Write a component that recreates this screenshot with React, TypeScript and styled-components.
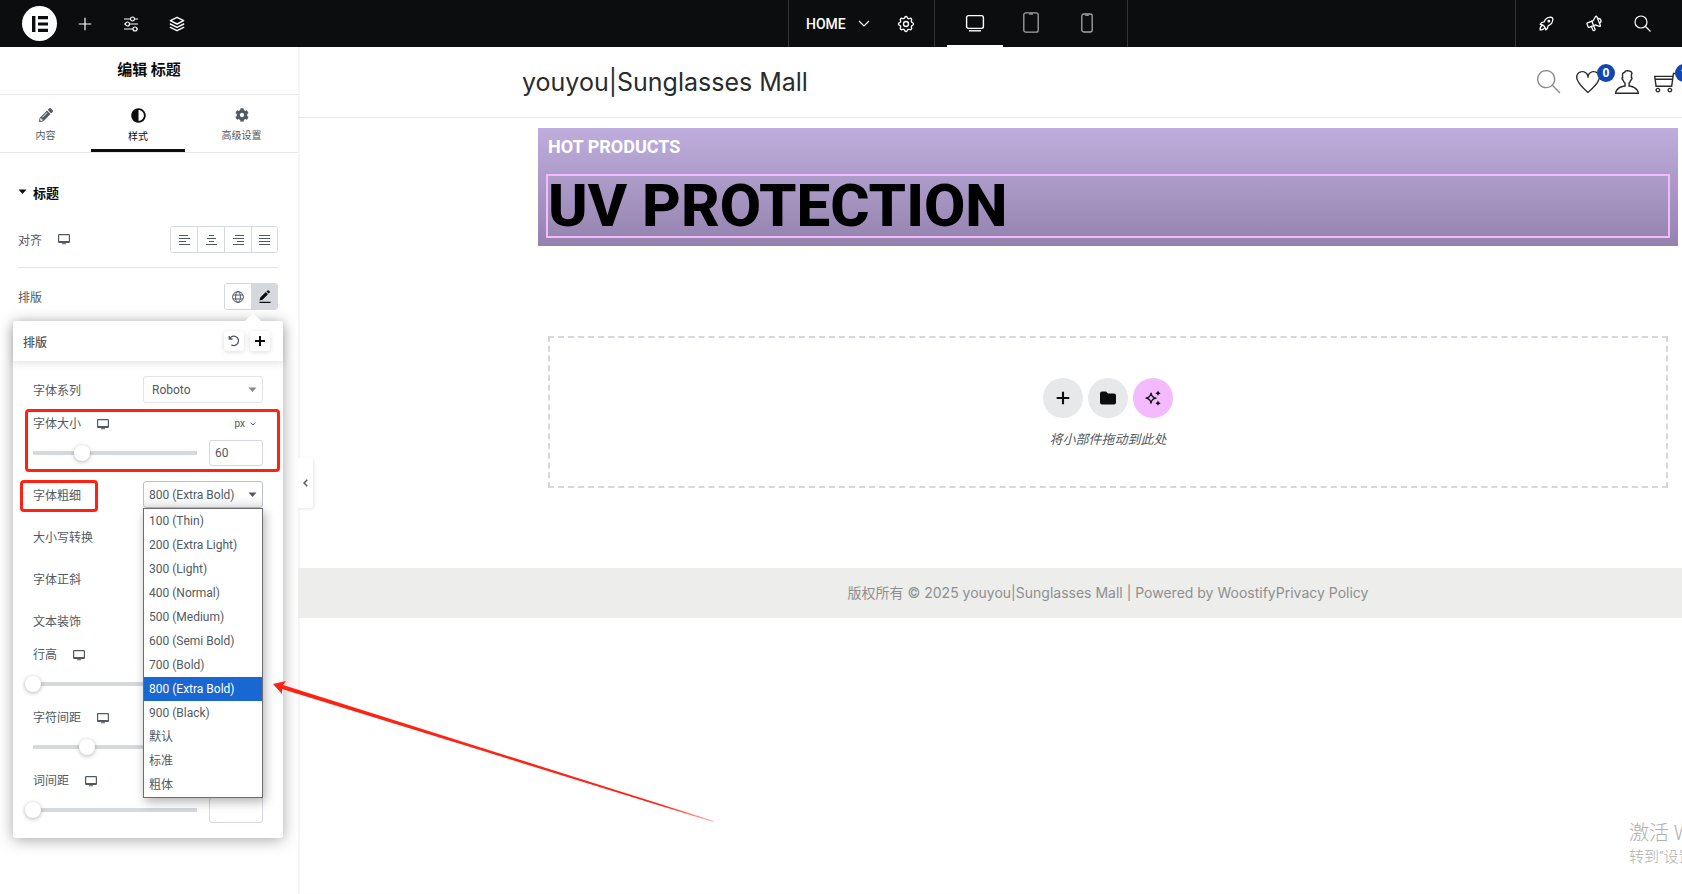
import React from "react";
import styled, { createGlobalStyle, css } from "styled-components";
import { TfiSearch, TfiHeart, TfiUser, TfiShoppingCart } from "react-icons/tfi";
import { TbStack2, TbSettings, TbRocket, TbSpeakerphone } from "react-icons/tb";
import { FaPencilAlt, FaAdjust, FaCog } from "react-icons/fa";

const GlobalStyle = createGlobalStyle`
  * { box-sizing: border-box; }
  body {
    margin: 0;
    background: #fff;
    font-family: Roboto, "Noto Sans CJK SC", sans-serif;
    font-size: 12px;
    color: #515962;
  }
  button, select, input { font: inherit; color: inherit; }
  h1, h2, h3, p, ul { margin: 0; padding: 0; }
`;

const RED = "#ff2213";
const LINE = "#d5d8dc";

const Page = styled.div`
  position: relative;
  min-height: 100vh;
  display: flex;
  flex-direction: column;
  overflow: hidden;
`;

/* ---------- top bar ---------- */

const TopBar = styled.header`
  display: grid;
  grid-template-columns: 788fr auto 387fr auto;
  height: 47px;
  background: #0c0d0e;
  color: #fff;
`;

const BarGroup = styled.div`
  display: flex;
  align-items: center;
`;

const LeftGroup = styled(BarGroup)`
  padding-left: 22px;
  gap: 18px;
`;

const CenterGroup = styled(BarGroup)`
  border-left: 1px solid #323437;
  border-right: 1px solid #323437;
`;

const PageGroup = styled(BarGroup)`
  width: 146px;
  height: 47px;
  padding-left: 17px;
  border-right: 1px solid #323437;
`;

const DeviceGroup = styled(BarGroup)`
  padding: 0 12px;
  width: 192px;
`;

const RightGroup = styled(BarGroup)`
  grid-column: 4;
  width: 167px;
  padding-left: 16px;
  gap: 20px;
  border-left: 1px solid #323437;
`;

const IconButton = styled.button`
  width: 28px;
  height: 28px;
  padding: 0;
  border: 0;
  background: none;
  display: flex;
  align-items: center;
  justify-content: center;
`;

const LogoButton = styled(IconButton)`
  width: 35px;
  height: 35px;
  border-radius: 50%;
  background: #fff;
  margin-right: -4px;
`;

const PageName = styled.button`
  display: flex;
  align-items: center;
  gap: 12px;
  padding: 0;
  border: 0;
  background: none;
  font-size: 14px;
  line-height: 20px;
  font-weight: 500;
  margin-right: 22px;
`;

const DeviceTab = styled.button<{ $active?: boolean }>`
  width: 56px;
  height: 47px;
  padding: 0;
  border: 0;
  background: none;
  border-bottom: 2px solid ${(p) => (p.$active ? "#fff" : "transparent")};
  color: ${(p) => (p.$active ? "#fff" : "#a3a5a8")};
  display: flex;
  align-items: center;
  justify-content: center;
`;

/* ---------- side panel ---------- */

const Workspace = styled.div`
  flex: 1;
  display: flex;
`;

const Panel = styled.aside`
  flex: 0 0 298px;
  overflow: hidden;
  display: flex;
  flex-direction: column;
  background: #fff;
`;

const PanelTitle = styled.h2`
  height: 48px;
  line-height: 46px;
  text-align: center;
  font-size: 15px;
  font-weight: 700;
  color: #0c0d0e;
  border-bottom: 1px solid #e6e8ea;
`;

const Tabs = styled.nav`
  display: grid;
  grid-template-columns: 91fr 94fr 113fr;
  height: 58px;
  border-bottom: 1px solid #e6e8ea;
`;

const Tab = styled.button<{ $active?: boolean }>`
  display: flex;
  flex-direction: column;
  align-items: center;
  gap: 6px;
  padding: 13px 0 0;
  border: 0;
  border-bottom: 3px solid ${(p) => (p.$active ? "#0c0d0e" : "transparent")};
  background: none;
  font-size: 10px;
  line-height: 16px;
  color: ${(p) => (p.$active ? "#0c0d0e" : "#515962")};
  svg { display: block; }
`;

const Controls = styled.div`
  padding: 19px 20px 56px 18px;
`;

const SectionToggle = styled.button`
  display: flex;
  align-items: center;
  gap: 6px;
  height: 40px;
  margin-bottom: 1px;
  padding: 0;
  border: 0;
  background: none;
  font-size: 13px;
  font-weight: 700;
  color: #0c0d0e;
`;

const ControlRow = styled.div<{ $divided?: boolean }>`
  display: flex;
  align-items: center;
  justify-content: space-between;
  ${(p) =>
    p.$divided
      ? css`
          padding: 13px 0 14px;
          margin-bottom: 15px;
          border-bottom: 1px solid #e1e3e6;
        `
      : ""}
`;

const LabelGroup = styled.div`
  display: flex;
  align-items: center;
  gap: 16px;
  svg { display: block; }
`;

const ButtonSet = styled.div`
  display: flex;
  height: 27px;
  border: 1px solid ${LINE};
  border-radius: 3px;
  overflow: hidden;
`;

const SetButton = styled.button<{ $active?: boolean }>`
  width: 27px;
  padding: 0;
  border: 0;
  background: ${(p) => (p.$active ? LINE : "#fff")};
  color: ${(p) => (p.$active ? "#0c0d0e" : "#515962")};
  display: flex;
  align-items: center;
  justify-content: center;
  & + & { border-left: 1px solid ${LINE}; }
  &:first-child, &:last-child { width: 26px; }
`;

/* ---------- typography popover ---------- */

const Popover = styled.section`
  position: relative;
  margin: 11px -5px 0;
  border-radius: 3px;
  background: #fff;
  box-shadow: 0 2px 15px rgba(0, 0, 0, 0.35);
  &::before {
    content: "";
    position: absolute;
    top: -8px;
    right: 22px;
    border: 8px solid transparent;
    border-top: 0;
    border-bottom-color: #fff;
  }
`;

const PopoverHeader = styled.div`
  display: flex;
  align-items: center;
  gap: 6px;
  height: 40px;
  padding: 0 13px 0 10px;
  border-radius: 3px 3px 0 0;
  box-shadow: 0 2px 8px rgba(0, 0, 0, 0.12);
`;

const PopoverTitle = styled.h3`
  flex: 1;
  font-size: 12px;
  font-weight: 500;
`;

const SquareButton = styled.button`
  width: 20px;
  height: 20px;
  padding: 0;
  border: 0;
  border-radius: 3px;
  background: #fff;
  box-shadow: 0 1px 5px rgba(0, 0, 0, 0.14);
  display: flex;
  align-items: center;
  justify-content: center;
`;

const PopoverBody = styled.div`
  display: flex;
  flex-direction: column;
  gap: 15px;
  padding: 15px 20px 15px;
`;

const Field = styled.div`
  position: relative;
  display: flex;
  align-items: center;
  justify-content: space-between;
  height: 27px;
`;

const SliderField = styled.div`
  position: relative;
  display: flex;
  flex-direction: column;
  gap: 9px;
`;

const SliderHead = styled.div`
  display: flex;
  align-items: center;
  justify-content: space-between;
  height: 12px;
  line-height: 12px;
`;

const SliderRow = styled.div`
  display: flex;
  align-items: center;
  gap: 12px;
  height: 27px;
`;

const Track = styled.div`
  flex: 1;
  height: 16px;
  display: flex;
  background: linear-gradient(${LINE}, ${LINE}) center / 100% 4px no-repeat;
`;

const Range = styled.input`
  appearance: none;
  flex: 1;
  min-width: 0;
  height: 16px;
  margin: 0 -8px;
  background: none;
  &::-webkit-slider-thumb {
    appearance: none;
    width: 16px;
    height: 16px;
    border-radius: 50%;
    background: #fff;
    box-shadow: 0 1px 4px rgba(0, 0, 0, 0.3);
  }
`;

const NumberBox = styled.input`
  width: 54px;
  height: 26px;
  padding: 0 5px;
  border: 1px solid ${LINE};
  border-radius: 3px;
  background: #fff;
`;

const UnitButton = styled.button`
  display: flex;
  align-items: center;
  gap: 5px;
  padding: 0 7px 0 0;
  border: 0;
  background: none;
  font-size: 10px;
  line-height: 12px;
`;

const SelectWrap = styled.div`
  position: relative;
  width: 120px;
  height: 27px;
  svg {
    position: absolute;
    right: 6px;
    top: 11px;
    pointer-events: none;
  }
`;

const Select = styled.select<{ $open?: boolean; $inset?: boolean }>`
  appearance: none;
  width: 100%;
  height: 27px;
  padding: 0 ${(p) => (p.$inset ? 8 : 5)}px;
  border: 1px solid ${(p) => (p.$open ? "#babfc5" : p.$inset ? "#e1e3e6" : LINE)};
  border-radius: 3px;
  background: ${(p) =>
    p.$open ? "linear-gradient(#fff 55%, #ececec)" : "#fff"};
`;

const OptionList = styled.ul`
  position: absolute;
  z-index: 2;
  top: 27px;
  left: 0;
  width: 120px;
  border: 1px solid #6b6d70;
  background: #fff;
  list-style: none;
  box-shadow: 2px 4px 10px rgba(0, 0, 0, 0.3);
`;

const Option = styled.li<{ $selected: boolean }>`
  height: 24px;
  padding: 0 5px;
  line-height: 24px;
  background: ${(p) => (p.$selected ? "#1967d2" : "#fff")};
  color: ${(p) => (p.$selected ? "#fff" : "#515962")};
`;

const MarkBox = styled.span<{ $wide?: boolean }>`
  position: absolute;
  border: 3px solid ${RED};
  border-radius: 4px;
  pointer-events: none;
  ${(p) =>
    p.$wide
      ? css`
          inset: -9px -17px -6px -8px;
        `
      : css`
          inset: -1px auto -4px -13px;
          width: 78px;
        `}
`;

const Arrow = styled.svg`
  position: absolute;
  z-index: 3;
  top: 680px;
  left: 273px;
  pointer-events: none;
`;

/* ---------- preview ---------- */

const Preview = styled.main`
  position: relative;
  flex: 1;
  min-width: 0;
  overflow: hidden;
  background: #fff;
  box-shadow: inset 2px 0 1px #f5f5f5;
`;

const CollapseHandle = styled.button`
  position: absolute;
  top: 411px;
  left: 0;
  width: 15px;
  height: 50px;
  padding: 0;
  border: 0;
  border-radius: 0 3px 3px 0;
  background: #fff;
  box-shadow: 1px 1px 3px rgba(0, 0, 0, 0.1);
  display: flex;
  align-items: center;
  justify-content: center;
`;

const SiteHeader = styled.div`
  display: flex;
  align-items: center;
  justify-content: space-between;
  height: 71px;
  padding: 0 4px 0 224px;
  border-bottom: 1px solid #e8e8e8;
`;

const SiteTitle = styled.a`
  font-family: Inter, "Noto Sans CJK SC", sans-serif;
  font-size: 25px;
  line-height: 40px;
  font-weight: 400;
  color: #2b2b2b;
  text-decoration: none;
`;

const SiteTools = styled.div`
  display: flex;
  align-items: center;
  gap: 15px;
`;

const SiteLink = styled.a<{ $dim?: boolean }>`
  position: relative;
  display: block;
  width: 24px;
  height: 24px;
  color: ${(p) => (p.$dim ? "#8a8a8a" : "#2b2b2b")};
  svg { display: block; }
`;

const Badge = styled.span`
  position: absolute;
  top: -6px;
  left: 21px;
  width: 18px;
  height: 18px;
  border-radius: 50%;
  background: #1346af;
  color: #fff;
  font-family: "Open Sans", sans-serif;
  font-size: 12px;
  font-weight: 700;
  line-height: 18px;
  text-align: center;
`;

const PageContent = styled.div`
  padding: 10px 4px 80px 240px;
`;

const Hero = styled.section`
  display: flex;
  flex-direction: column;
  gap: 20px;
  padding: 10px;
  background: linear-gradient(#bfaedd, #9482ae);
`;

const HeroKicker = styled.h2`
  font-size: 18px;
  line-height: 18px;
  font-weight: 700;
  color: #fff;
`;

const HeroTitle = styled.h1`
  font-size: 60px;
  line-height: 60px;
  font-weight: 800;
  color: #000;
  outline: 2px solid #f3bafd;
`;

const DropZone = styled.section`
  display: flex;
  flex-direction: column;
  align-items: center;
  gap: 12px;
  margin: 90px 10px 0;
  padding: 40px 0 36px;
  border: 2px dashed ${LINE};
`;

const RoundButtons = styled.div`
  display: flex;
  gap: 5px;
`;

const RoundButton = styled.button<{ $pink?: boolean }>`
  width: 40px;
  height: 40px;
  padding: 0;
  border: 0;
  border-radius: 50%;
  background: ${(p) => (p.$pink ? "#f3bafd" : "#e6e8ea")};
  color: #0c0d0e;
  display: flex;
  align-items: center;
  justify-content: center;
`;

const DropHint = styled.p`
  font-size: 13px;
  line-height: 20px;
  font-style: italic;
`;

const SiteFooter = styled.footer`
  padding: 0 4px 0 240px;
  background: #ededeb;
  font-family: Inter, "Noto Sans CJK SC", sans-serif;
  font-size: 14px;
  line-height: 50px;
  text-align: center;
  color: #8f8f8f;
  a { color: inherit; text-decoration: none; }
`;

const Watermark = styled.div`
  position: absolute;
  left: calc(100% - 53px);
  bottom: 25px;
  white-space: nowrap;
  font-weight: 300;
  color: #b0b0b0;
`;

const WatermarkTitle = styled.p`
  font-size: 20px;
  line-height: 24px;
`;

const WatermarkText = styled.p`
  font-size: 15px;
  line-height: 24px;
`;

/* ---------- icons ---------- */

const DesktopMini = () => (
  <svg width="12" height="11" viewBox="0 0 12 11" aria-hidden="true">
    <path
      d="M.6 1.2Q.6.6 1.2.6h9.6q.6 0 .6.6v6.6q0 .6-.6.6H1.2q-.6 0-.6-.6z"
      fill="none"
      stroke="currentColor"
      strokeWidth="1.2"
    />
    <path d="M1 7h10v1.6H1zM4 9.3h4v1H4z" fill="currentColor" />
  </svg>
);

const Caret = ({ color = "#515962" }: { color?: string }) => (
  <svg width="9" height="6" viewBox="0 0 9 6" aria-hidden="true">
    <path d="M.5.5h8L4.5 5z" fill={color} />
  </svg>
);

const AlignIcon = ({ lines }: { lines: [number, number][] }) => (
  <svg width="11" height="10" viewBox="0 0 11 10" stroke="currentColor" aria-hidden="true">
    {lines.map(([a, b], i) => (
      <path key={i} d={`M${a} ${i * 3 + 0.5}H${b}`} />
    ))}
  </svg>
);

const Plus = ({ size, width }: { size: number; width: number }) => (
  <svg width={size} height={size} viewBox="0 0 20 20" aria-hidden="true">
    <path d="M10 1v18M1 10h18" stroke="currentColor" strokeWidth={width} />
  </svg>
);

const alignments: { name: string; lines: [number, number][] }[] = [
  { name: "左对齐", lines: [[0, 9], [0, 11], [0, 7], [0, 11]] },
  { name: "居中", lines: [[3, 8], [1, 10], [3, 8], [0, 11]] },
  { name: "右对齐", lines: [[2, 11], [0, 11], [4, 11], [0, 11]] },
  { name: "两端对齐", lines: [[0, 11], [0, 11], [0, 11], [0, 11]] },
];

const weights = [
  "100 (Thin)",
  "200 (Extra Light)",
  "300 (Light)",
  "400 (Normal)",
  "500 (Medium)",
  "600 (Semi Bold)",
  "700 (Bold)",
  "800 (Extra Bold)",
  "900 (Black)",
  "默认",
  "标准",
  "粗体",
];

const SliderControl = ({
  id,
  label,
  value,
  max,
  text,
  marked,
}: {
  id: string;
  label: string;
  value: number;
  max: number;
  text: string;
  marked?: boolean;
}) => (
  <SliderField>
    <SliderHead>
      <LabelGroup>
        <label htmlFor={id}>{label}</label>
        <DesktopMini />
      </LabelGroup>
      <UnitButton type="button">
        px
        <svg width="6" height="4" viewBox="0 0 6 4" fill="none" stroke="currentColor" aria-hidden="true">
          <path d="M.7.7 3 3 5.3.7" />
        </svg>
      </UnitButton>
    </SliderHead>
    <SliderRow>
      <Track>
        <Range id={id} type="range" min={0} max={max} defaultValue={value} />
      </Track>
      <NumberBox aria-label={label} defaultValue={text} />
    </SliderRow>
    {marked && <MarkBox $wide />}
  </SliderField>
);

const SelectControl = ({ id, label }: { id: string; label: string }) => (
  <Field>
    <label htmlFor={id}>{label}</label>
    <SelectWrap>
      <Select id={id}>
        <option>默认</option>
      </Select>
      <Caret />
    </SelectWrap>
  </Field>
);

export default function App() {
  return (
    <Page>
      <GlobalStyle />
      <TopBar>
        <LeftGroup>
          <LogoButton type="button" aria-label="Elementor">
            <svg width="16" height="16" viewBox="0 0 16 16" fill="#0c0d0e" aria-hidden="true">
              <path d="M0 0h3.4v16H0zM6 0h10v3.2H6zM6 6.4h10v3.2H6zM6 12.8h10V16H6z" />
            </svg>
          </LogoButton>
          <IconButton type="button" aria-label="添加元素">
            <Plus size={14} width={1.7} />
          </IconButton>
          <IconButton type="button" aria-label="站点设置">
            <svg width="16" height="16" viewBox="0 0 16 16" fill="none" stroke="currentColor" strokeWidth="1.2" aria-hidden="true">
              <path d="M1 3h6.500M11.500 3H15M1 8h1.500M6.500 8H15M1 13h9M14 13h1" />
              <circle cx="9.500" cy="3" r="2" />
              <circle cx="4.500" cy="8" r="2" />
              <circle cx="12" cy="13" r="2" />
            </svg>
          </IconButton>
          <IconButton type="button" aria-label="结构">
            <TbStack2 size={20} strokeWidth={1.7} />
          </IconButton>
        </LeftGroup>
        <CenterGroup>
          <PageGroup>
            <PageName type="button">
              HOME
              <svg width="12" height="7" viewBox="0 0 12 7" fill="none" stroke="currentColor" strokeWidth="1.2" aria-hidden="true">
                <path d="M1 1l5 5 5-5" />
              </svg>
            </PageName>
            <IconButton type="button" aria-label="页面设置">
              <TbSettings size={20} strokeWidth={1.6} />
            </IconButton>
          </PageGroup>
          <DeviceGroup>
            <DeviceTab type="button" $active aria-label="桌面">
              <svg width="20" height="18" viewBox="0 0 20 18" fill="none" stroke="currentColor" aria-hidden="true">
                <rect x="1.6" y="1.6" width="16.8" height="12.8" rx="1.8" strokeWidth="1.4" />
                <path d="M4 16.8h12" strokeWidth="1.4" />
              </svg>
            </DeviceTab>
            <DeviceTab type="button" aria-label="平板">
              <svg width="16" height="21" viewBox="0 0 16 21" fill="none" stroke="currentColor" strokeWidth="1.3" aria-hidden="true">
                <rect x=".8" y=".8" width="14.4" height="19.4" rx="2" />
                <path d="M6 2h4" />
              </svg>
            </DeviceTab>
            <DeviceTab type="button" aria-label="手机">
              <svg width="12" height="20" viewBox="0 0 12 20" fill="none" stroke="currentColor" strokeWidth="1.3" aria-hidden="true">
                <rect x=".8" y="1" width="10.4" height="18" rx="2" />
                <path d="M4.2 2.2h3.6" />
              </svg>
            </DeviceTab>
          </DeviceGroup>
        </CenterGroup>
        <RightGroup>
          <IconButton type="button" aria-label="检查清单">
            <TbRocket size={19} strokeWidth={1.6} />
          </IconButton>
          <IconButton type="button" aria-label="新功能">
            <TbSpeakerphone size={19} strokeWidth={1.6} transform="rotate(-22)" />
          </IconButton>
          <IconButton type="button" aria-label="查找">
            <svg width="17" height="17" viewBox="0 0 17 17" fill="none" stroke="currentColor" strokeWidth="1.2" aria-hidden="true">
              <circle cx="7" cy="7" r="6" />
              <path d="M11.5 11.5l5 5" />
            </svg>
          </IconButton>
        </RightGroup>
      </TopBar>

      <Workspace>
        <Panel>
          <PanelTitle>编辑 标题</PanelTitle>
          <Tabs>
            <Tab type="button">
              <FaPencilAlt size={14} />
              内容
            </Tab>
            <Tab type="button" $active>
              <FaAdjust size={15} />
              样式
            </Tab>
            <Tab type="button">
              <FaCog size={14} />
              高级设置
            </Tab>
          </Tabs>
          <Controls>
            <SectionToggle type="button">
              <Caret color="#0c0d0e" />
              标题
            </SectionToggle>
            <ControlRow $divided>
              <LabelGroup>
                <span>对齐</span>
                <DesktopMini />
              </LabelGroup>
              <ButtonSet>
                {alignments.map((a) => (
                  <SetButton key={a.name} type="button" aria-label={a.name}>
                    <AlignIcon lines={a.lines} />
                  </SetButton>
                ))}
              </ButtonSet>
            </ControlRow>
            <ControlRow>
              <span>排版</span>
              <ButtonSet>
                <SetButton type="button" aria-label="全局排版">
                  <svg width="12" height="12" viewBox="0 0 12 12" fill="none" stroke="currentColor" aria-hidden="true">
                    <circle cx="6" cy="6" r="5.4" />
                    <ellipse cx="6" cy="6" rx="2.4" ry="5.4" />
                    <path d="M1 4h10M1 8h10" />
                  </svg>
                </SetButton>
                <SetButton type="button" $active aria-label="编辑排版">
                  <svg width="12" height="13" viewBox="0 0 12 13" fill="currentColor" aria-hidden="true">
                    <path d="M.6 10.4l.7-2.9 5.5-5.4 2.2 2.2-5.5 5.4zM7.5 1.4L8.6.4q.5-.5 1.1 0l1.1 1.1q.5.5 0 1.1l-1.1 1zM.5 11.8h11V13H.5z" />
                  </svg>
                </SetButton>
              </ButtonSet>
            </ControlRow>

            <Popover>
              <PopoverHeader>
                <PopoverTitle>排版</PopoverTitle>
                <SquareButton type="button" aria-label="恢复默认">
                  <svg width="12" height="12" viewBox="0 0 12 12" fill="none" stroke="currentColor" strokeWidth="1.3" aria-hidden="true">
                    <path d="M1.300 1v3h3.200M1.600 3.800A4.700 4.700 0 1 1 3.400 9.900" />
                  </svg>
                </SquareButton>
                <SquareButton type="button" aria-label="添加">
                  <svg width="10" height="10" viewBox="0 0 10 10" aria-hidden="true">
                    <path d="M5 0v10M0 5h10" stroke="#0c0d0e" strokeWidth="2" />
                  </svg>
                </SquareButton>
              </PopoverHeader>
              <PopoverBody>
                <Field>
                  <label htmlFor="family">字体系列</label>
                  <SelectWrap>
                    <Select id="family" $inset>
                      <option>Roboto</option>
                    </Select>
                    <Caret color="#888" />
                  </SelectWrap>
                </Field>
                <SliderControl id="size" label="字体大小" value={60} max={200} text="60" marked />
                <Field>
                  <label htmlFor="weight">字体粗细</label>
                  <SelectWrap>
                    <Select id="weight" $open defaultValue="800 (Extra Bold)">
                      {weights.map((w) => (
                        <option key={w}>{w}</option>
                      ))}
                    </Select>
                    <Caret />
                    <OptionList role="listbox" aria-label="字体粗细">
                      {weights.map((w) => (
                        <Option
                          key={w}
                          role="option"
                          aria-selected={w === "800 (Extra Bold)"}
                          $selected={w === "800 (Extra Bold)"}
                        >
                          {w}
                        </Option>
                      ))}
                    </OptionList>
                  </SelectWrap>
                  <MarkBox />
                </Field>
                <SelectControl id="transform" label="大小写转换" />
                <SelectControl id="style" label="字体正斜" />
                <SelectControl id="decoration" label="文本装饰" />
                <SliderControl id="line" label="行高" value={0} max={100} text="" />
                <SliderControl id="letter" label="字符间距" value={33} max={100} text="" />
                <SliderControl id="word" label="词间距" value={0} max={100} text="" />
              </PopoverBody>
            </Popover>
          </Controls>
        </Panel>

        <Preview>
          <SiteHeader>
            <SiteTitle href="#">youyou|Sunglasses Mall</SiteTitle>
            <SiteTools>
              <SiteLink href="#" $dim aria-label="搜索">
                <TfiSearch size={24} />
              </SiteLink>
              <SiteLink href="#" aria-label="心愿单">
                <TfiHeart size={24} />
                <Badge>0</Badge>
              </SiteLink>
              <SiteLink href="#" aria-label="账户">
                <TfiUser size={24} />
              </SiteLink>
              <SiteLink href="#" aria-label="购物车">
                <TfiShoppingCart size={24} />
                <Badge>1</Badge>
              </SiteLink>
            </SiteTools>
          </SiteHeader>
          <PageContent>
            <Hero>
              <HeroKicker>HOT PRODUCTS</HeroKicker>
              <HeroTitle>UV PROTECTION</HeroTitle>
            </Hero>
            <DropZone>
              <RoundButtons>
                <RoundButton type="button" aria-label="添加新容器">
                  <Plus size={14} width={3} />
                </RoundButton>
                <RoundButton type="button" aria-label="添加模板">
                  <svg width="16" height="14" viewBox="0 0 16 14" fill="currentColor" aria-hidden="true">
                    <path d="M2 .5h4l2 2h6q2 0 2 2v7q0 2-2 2H2q-2 0-2-2v-9q0-2 2-2z" />
                  </svg>
                </RoundButton>
                <RoundButton type="button" $pink aria-label="AI">
                  <svg width="16" height="16" viewBox="0 0 16 16" aria-hidden="true">
                    <path
                      d="M6 3.2Q6.6 7.6 11 8.2 6.6 8.8 6 13.2 5.4 8.8 1 8.2 5.4 7.6 6 3.2z"
                      fill="none"
                      stroke="currentColor"
                      strokeWidth="1.3"
                      strokeLinejoin="round"
                    />
                    <path
                      d="M13 .6q.4 2 2.6 2.6-2.2.6-2.6 2.6-.4-2-2.6-2.6 2.2-.6 2.6-2.6zM13 10.600q.4 2 2.6 2.6-2.2.6-2.6 2.6-.4-2-2.6-2.6 2.2-.6 2.6-2.6z"
                      fill="currentColor"
                    />
                  </svg>
                </RoundButton>
              </RoundButtons>
              <DropHint>将小部件拖动到此处</DropHint>
            </DropZone>
          </PageContent>
          <SiteFooter>
            版权所有 © 2025 youyou|Sunglasses Mall | Powered by <a href="#">Woostify</a>
            <a href="#">Privacy Policy</a>
          </SiteFooter>
          <CollapseHandle type="button" aria-label="收起面板">
            <svg width="5" height="8" viewBox="0 0 5 8" fill="none" stroke="#515962" strokeWidth="1.5" aria-hidden="true">
              <path d="M4.3.7 1 4l3.300 3.300" />
            </svg>
          </CollapseHandle>
        </Preview>
      </Workspace>

      <Arrow width="442" height="144" viewBox="0 0 442 144" aria-hidden="true">
        <defs>
          <linearGradient id="fade" x1="0" x2="1" y1="0" y2="0">
            <stop offset=".88" stopColor={RED} />
            <stop offset="1" stopColor={RED} stopOpacity=".3" />
          </linearGradient>
        </defs>
        <path d="M0 4 13 1 10 5 441 141 440 142 9 9 9 14z" fill="url(#fade)" />
      </Arrow>

      <Watermark>
        <WatermarkTitle>激活 Windows</WatermarkTitle>
        <WatermarkText>转到“设置”以激活 Windows。</WatermarkText>
      </Watermark>
    </Page>
  );
}
